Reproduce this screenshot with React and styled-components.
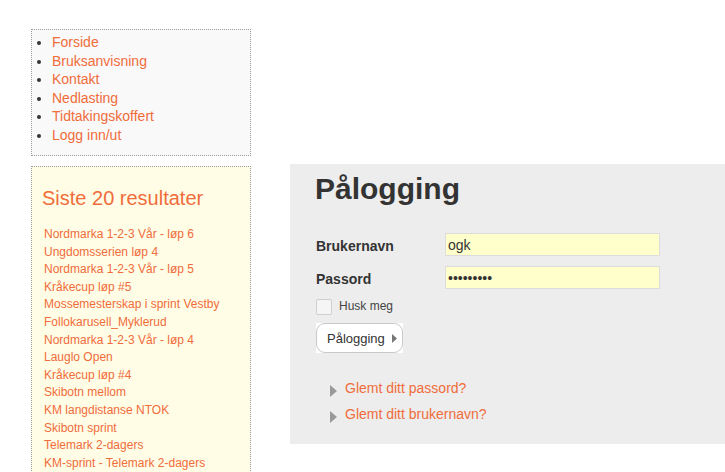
import React from "react";
import styled, { createGlobalStyle } from "styled-components";

const Global = createGlobalStyle`
  html, body { margin: 0; padding: 0; overflow: hidden; background: #fff; }
  body { font-family: "Liberation Sans", Arial, sans-serif; color: #333; }
`;

const ORANGE = "#f06c3b";

const Page = styled.div`
  display: flex;
  align-items: flex-start;
  gap: 39px;
  padding: 29px 0 0 31px;
  height: 472px;
  box-sizing: border-box;
`;

const Sidebar = styled.div`
  width: 220px;
  flex: none;
  display: flex;
  flex-direction: column;
  gap: 10px;
`;

const Box = styled.div`
  border: 1px dotted #9a9a9a;
  background: ${(p) => p.$bg};
  box-sizing: border-box;
`;

const NavList = styled.ul`
  margin: 0;
  padding: 3px 0 11px 20px;
  list-style: disc;
  color: #333;
  font-size: 14px;
  line-height: 18.5px;
`;

const Link = styled.a`
  color: ${ORANGE};
  text-decoration: none;
  cursor: pointer;
`;

const BoxTitle = styled.h2`
  margin: 0;
  padding: 19px 0 0 10px;
  font-size: 20px;
  line-height: 24px;
  font-weight: normal;
  color: ${ORANGE};
`;

const ResultList = styled.ul`
  list-style: none;
  margin: 0;
  padding: 16px 0 20px 12px;
  font-size: 12px;
  line-height: 17.6px;
`;

const Main = styled.div`
  flex: 1;
  min-width: 0;
  margin-top: 135px;
`;

const Panel = styled.div`
  background: #ededed;
  padding: 7px 0 17px 26px;
`;

const Heading = styled.h1`
  margin: 0 0 0 -1px;
  font-size: 30px;
  line-height: 36px;
  font-weight: bold;
  color: #333;
`;

const Form = styled.div`
  display: grid;
  grid-template-columns: 129px 215px;
  row-gap: 10px;
  align-items: center;
  margin-top: 26px;
`;

const Label = styled.label`
  font-size: 14px;
  font-weight: bold;
  color: #333;
  padding-top: 3px;
`;

const Input = styled.input`
  box-sizing: border-box;
  width: 215px;
  height: 23px;
  margin: 0;
  border: 1px solid #dcdcdc;
  background: #ffffcc;
  padding: 0 2px;
  font-family: "Liberation Sans", Arial, sans-serif;
  font-size: 14px;
  color: #333;
  outline: none;
`;

const CheckRow = styled.div`
  display: flex;
  align-items: center;
  gap: 7px;
  margin-top: 10px;
  font-size: 12px;
  color: #444;
`;

const Check = styled.input`
  appearance: none;
  margin: 0;
  width: 16px;
  height: 16px;
  border: 1px solid #cfcfcf;
  border-radius: 2px;
  background: #f5f5f5;
  box-sizing: border-box;
`;

const CheckText = styled.span`
  margin-top: -3px;
`;

const ButtonBack = styled.div`
  display: inline-flex;
  margin-top: 8px;
  background: #fff;
`;

const Button = styled.button`
  display: flex;
  align-items: center;
  gap: 7px;
  height: 30px;
  box-sizing: border-box;
  padding: 0 5px 0 10px;
  border: 1px solid #c9c9c9;
  border-radius: 9px;
  background: #fff;
  font-family: "Liberation Sans", Arial, sans-serif;
  font-size: 13px;
  color: #333;
  cursor: pointer;
`;

const HelpList = styled.ul`
  list-style: none;
  margin: 22px 0 0 0;
  padding: 0 0 0 14px;
  font-size: 14px;
  line-height: 26px;
`;

const HelpItem = styled.li`
  display: flex;
  align-items: center;
  gap: 8px;
`;

const Arrow = styled.svg`
  flex: none;
  margin-top: ${(p) => p.$shift || 0}px;
`;

const Tri = ({ w, h, color, shift }) => (
  <Arrow width={w} height={h} viewBox={`0 0 ${w} ${h}`} $shift={shift}>
    <polygon points={`0,0 ${w},${h / 2} 0,${h}`} fill={color} />
  </Arrow>
);

const nav = ["Forside", "Bruksanvisning", "Kontakt", "Nedlasting", "Tidtakingskoffert", "Logg inn/ut"];
const results = [
  "Nordmarka 1-2-3 Vår - løp 6",
  "Ungdomsserien løp 4",
  "Nordmarka 1-2-3 Vår - løp 5",
  "Kråkecup løp #5",
  "Mossemesterskap i sprint Vestby",
  "Follokarusell_Myklerud",
  "Nordmarka 1-2-3 Vår - løp 4",
  "Lauglo Open",
  "Kråkecup løp #4",
  "Skibotn mellom",
  "KM langdistanse NTOK",
  "Skibotn sprint",
  "Telemark 2-dagers",
  "KM-sprint - Telemark 2-dagers",
];

export default function App() {
  return (
    <>
      <Global />
      <Page>
        <Sidebar>
          <Box $bg="#f9f9f9">
            <NavList>
              {nav.map((n) => (
                <li key={n}>
                  <Link>{n}</Link>
                </li>
              ))}
            </NavList>
          </Box>
          <Box $bg="#fffde6">
            <BoxTitle>Siste 20 resultater</BoxTitle>
            <ResultList>
              {results.map((r, i) => (
                <li key={i}>
                  <Link>{r}</Link>
                </li>
              ))}
            </ResultList>
          </Box>
        </Sidebar>
        <Main>
          <Panel>
            <Heading>Pålogging</Heading>
            <Form>
              <Label htmlFor="u">Brukernavn</Label>
              <Input id="u" type="text" defaultValue="ogk" readOnly />
              <Label htmlFor="p">Passord</Label>
              <Input id="p" type="password" defaultValue="ogkogkogk" readOnly />
            </Form>
            <CheckRow>
              <Check type="checkbox" id="r" />
              <CheckText>Husk meg</CheckText>
            </CheckRow>
            <ButtonBack>
              <Button type="button">
                Pålogging
                <Tri w={5} h={9} color="#777" />
              </Button>
            </ButtonBack>
            <HelpList>
              <HelpItem>
                <Tri w={7} h={12} color="#999" shift={5} />
                <Link>Glemt ditt passord?</Link>
              </HelpItem>
              <HelpItem>
                <Tri w={7} h={12} color="#999" shift={5} />
                <Link>Glemt ditt brukernavn?</Link>
              </HelpItem>
            </HelpList>
          </Panel>
        </Main>
      </Page>
    </>
  );
}
